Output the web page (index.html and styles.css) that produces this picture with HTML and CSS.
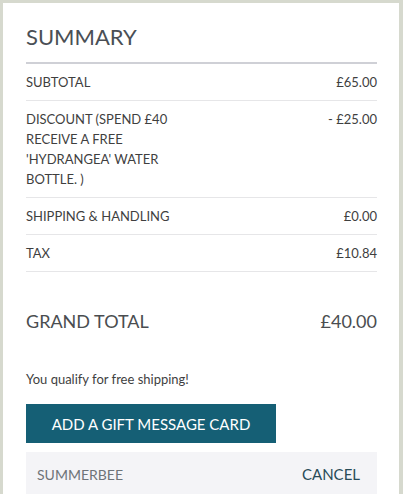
FILE: index.html
```html
<!DOCTYPE html>
<html lang="en">
<head>
<meta charset="utf-8">
<link rel="stylesheet" href="styles.css">
</head>
<body>
<div class="panel">
  <h2 class="title">SUMMARY</h2>
  <div class="rows">
    <div class="row"><span class="label">SUBTOTAL</span><span class="value">£65.00</span></div>
    <div class="row"><span class="label">DISCOUNT (SPEND £40 RECEIVE A FREE 'HYDRANGEA' WATER BOTTLE. )</span><span class="value">- £25.00</span></div>
    <div class="row"><span class="label">SHIPPING &amp; HANDLING</span><span class="value">£0.00</span></div>
    <div class="row"><span class="label">TAX</span><span class="value">£10.84</span></div>
  </div>
  <div class="grand"><span>GRAND TOTAL</span><span>£40.00</span></div>
  <p class="note">You qualify for free shipping!</p>
  <button class="gift">ADD A GIFT MESSAGE CARD</button>
  <div class="coupon"><span class="code">SUMMERBEE</span><span class="cancel">CANCEL</span></div>
</div>
</body>
</html>
```
FILE: styles.css
```css
html, body { margin: 0; padding: 0; }
body {
  background: #d6d9ce;
  font-family: "Lato", "Liberation Sans", sans-serif;
  color: #444;
  width: 403px;
  height: 494px;
  overflow: hidden;
}
.panel {
  margin: 3px 4px 0 3px;
  background: #fff;
  padding: 20px 22px 0 23px;
  height: 491px;
  box-sizing: border-box;
}
.title {
  margin: 0;
  font-weight: 400;
  font-size: 22px;
  line-height: 28px;
  color: #4a4f55;
  padding: 0 0 11px;
  border-bottom: 2px solid #cfd0d6;
}
.row {
  display: flex;
  justify-content: space-between;
  align-items: flex-start;
  padding: 8px 0;
  line-height: 20px;
  font-size: 13px;
  border-bottom: 1px solid #e6e6e8;
  color: #3f3f3f;
}
.label { width: 175px; }
.value { text-align: right; }
.grand {
  display: flex;
  justify-content: space-between;
  font-size: 18px;
  color: #4a4d50;
  margin-top: 37px;
  line-height: 24px;
}
.note {
  margin: 37px 0 0;
  font-size: 13px;
  line-height: 18px;
  color: #3f3f3f;
}
.gift {
  display: block;
  margin-top: 16px;
  height: 39px;
  width: 250px;
  border: 0;
  background: #155f75;
  color: #fff;
  font-family: inherit;
  font-size: 15px;
  padding: 0;
}
.coupon {
  margin-top: 9px;
  background: #f4f4f7;
  height: 44px;
  display: flex;
  align-items: center;
  justify-content: space-between;
  padding: 0 17px 0 11px;
}
.code { font-size: 14px; color: #6e7378; }
.cancel { font-size: 15px; color: #284b57; }
```
